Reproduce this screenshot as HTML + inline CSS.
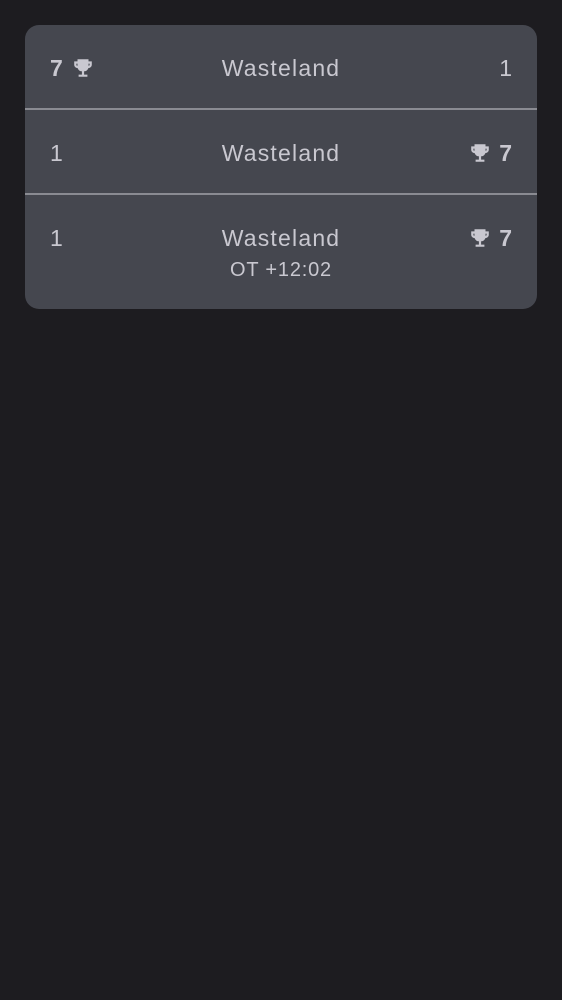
<!DOCTYPE html><html><head><style>
body{margin:0;background:#1d1c20;width:562px;height:1000px;font-family:"Liberation Sans",sans-serif;color:#c9c8d0}
.card{position:absolute;left:25px;top:25px;width:512px;height:284px;background:#45474f;border-radius:14px;overflow:hidden}
.sep{position:absolute;left:0;width:512px;height:2px;background:#8a8b92}
.c{position:absolute;left:0;width:512px;text-align:center;font-size:23px;letter-spacing:1.2px}
.l{position:absolute;left:25px;font-size:23px}
.r{position:absolute;right:25px;font-size:23px}
b{font-weight:bold}
svg{vertical-align:-3px}
</style></head><body><div class="card">
<svg width="0" height="0" style="position:absolute"><defs><symbol id="t" viewBox="0 0 20 20"><path d="M5 2h10v2h3v3c0 2-2 3-3 3-1 2-2 3-4 3v3h3v2H6v-2h3v-3c-2 0-3-1-4-3-1 0-3-1-3-3V4h3z M4 6v1c0 1 1 1 1 1V6z M15 6v2s1 0 1-1V6z" fill="#c9c8d0"/></symbol></defs></svg>
<div class="l" style="top:30px"><b>7</b><svg width="22" height="22" style="margin-left:9px"><use href="#t"/></svg></div>
<div class="c" style="top:30px">Wasteland</div>
<div class="r" style="top:30px">1</div>
<div class="sep" style="top:83px"></div>
<div class="l" style="top:115px">1</div>
<div class="c" style="top:115px">Wasteland</div>
<div class="r" style="top:115px"><svg width="22" height="22" style="margin-right:8px"><use href="#t"/></svg><b>7</b></div>
<div class="sep" style="top:168px"></div>
<div class="l" style="top:200px">1</div>
<div class="c" style="top:200px">Wasteland</div>
<div class="c" style="top:234px;font-size:20px;letter-spacing:0.8px">OT +12:02</div>
<div class="r" style="top:200px"><svg width="22" height="22" style="margin-right:8px"><use href="#t"/></svg><b>7</b></div>
</div></body></html>
